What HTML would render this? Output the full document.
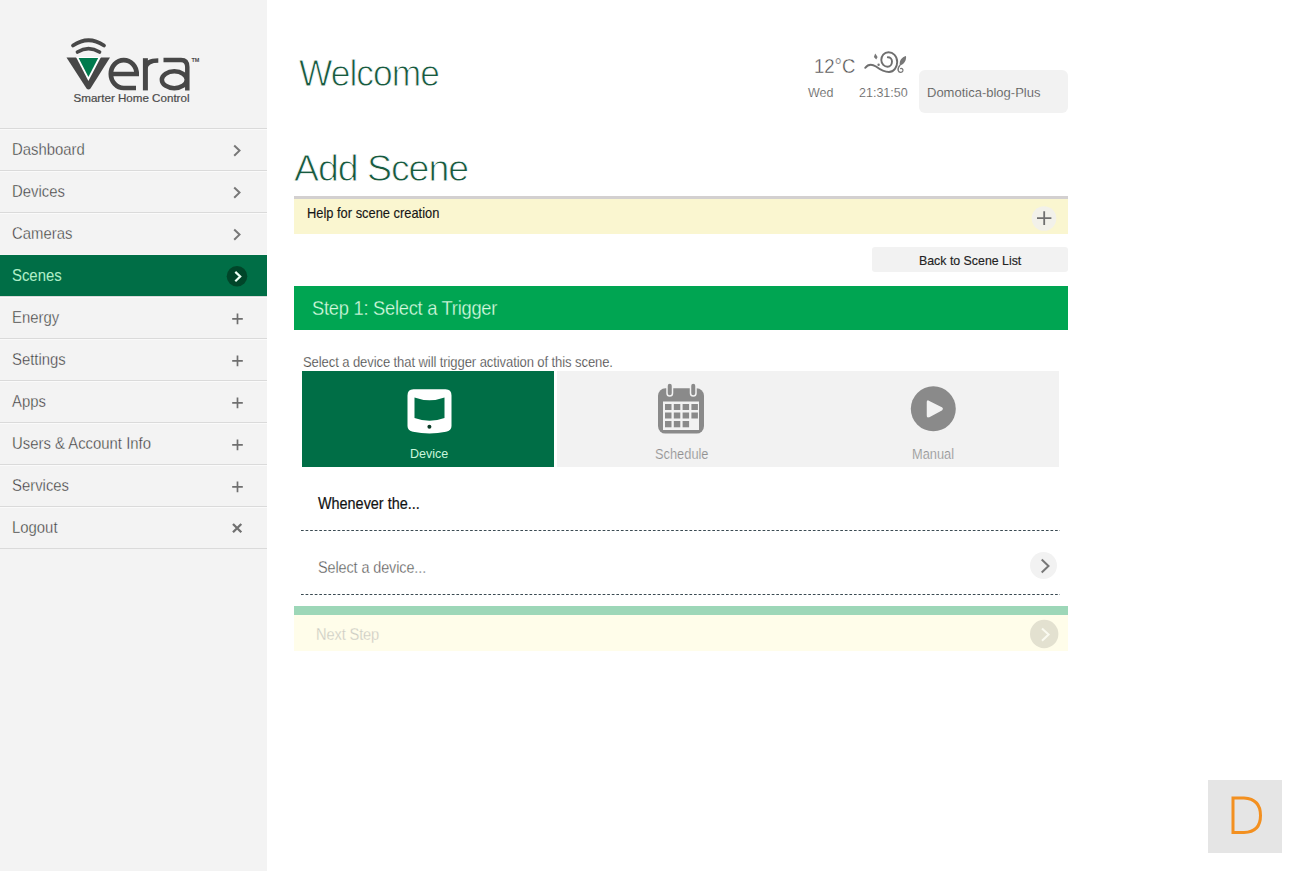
<!DOCTYPE html>
<html><head><meta charset="utf-8">
<style>
*{margin:0;padding:0;box-sizing:border-box;}
html,body{width:1300px;height:871px;overflow:hidden;background:#fff;font-family:"Liberation Sans",sans-serif;}
.abs{position:absolute;}
#side{position:absolute;left:0;top:0;width:267px;height:871px;background:#f3f3f3;}
.mi{position:absolute;left:0;width:267px;height:42px;border-top:1px solid #dadada;box-shadow:inset 0 1px 0 #fafafa;}
.mi span{position:absolute;left:12px;top:12px;font-size:16px;line-height:17px;color:#363636;white-space:nowrap;-webkit-text-stroke:0.35px #f3f3f3;transform:scaleX(0.93);transform-origin:0 0;}
.mi.act{background:#006e46;border-top:1px solid #f6f6f6;box-shadow:none;}
.mi.act span{color:#b0eec8;-webkit-text-stroke:0.05px #b0eec8;}
.mi svg{position:absolute;left:0;top:0;}
.t{position:absolute;white-space:nowrap;line-height:1;}
</style></head><body>
<div id="side">
  <svg class="abs" style="left:0;top:0" width="267" height="128" viewBox="0 0 267 128">
    <path d="M73 45.5 Q88.5 35 104 45.5" fill="none" stroke="#474747" stroke-width="3.8" stroke-linecap="round"/>
    <path d="M77.5 52 Q88.5 45.3 99.5 52" fill="none" stroke="#474747" stroke-width="3.7" stroke-linecap="round"/>
    <path d="M66.5 57.5 L110 57.5 L90.5 88.5 Q88.5 90.5 86.5 88.5 Z" fill="#474747"/>
    <path d="M76 57 L101 57 L88.4 81 Z" fill="#fff"/>
    <path d="M78.6 58 L98.2 58 L88.4 77 Z" fill="#007a4d"/>
    <g fill="none" stroke="#474747" stroke-width="4.7">
      <path d="M110.85 74 L139 74 M136.65 74 A12.9 13.95 0 0 0 110.85 74 A12.9 13.95 0 0 0 123.75 88 L136 88"/>
      <path d="M145.4 58.2 L145.4 90.4" stroke-width="5"/>
      <path d="M145.4 68 Q146.5 60.5 158.3 60.5" stroke-width="4.5"/>
      <path d="M163.5 60 L181 60 Q187.3 60 187.3 67 L187.3 90.4" stroke-width="4.5"/>
      <ellipse cx="174.3" cy="79.75" rx="12.45" ry="8.4" stroke-width="4.5"/>
    </g>
    <text x="191.5" y="62" font-family="Liberation Sans" font-weight="bold" font-size="5.5" fill="#474747">TM</text>
    <text x="73.5" y="102" font-family="Liberation Sans" font-size="10.3" fill="#4b4b4b" stroke="#4b4b4b" stroke-width="0.2" textLength="116" lengthAdjust="spacingAndGlyphs">Smarter Home Control</text>
  </svg>
  <div class="mi" style="top:128px"><span>Dashboard</span><svg width="267" height="42"><path d="M234.2 16.5 L239.5 21.6 L234.2 26.7" fill="none" stroke="#777" stroke-width="2"/></svg></div>
  <div class="mi" style="top:170px"><span>Devices</span><svg width="267" height="42"><path d="M234.2 16.5 L239.5 21.6 L234.2 26.7" fill="none" stroke="#777" stroke-width="2"/></svg></div>
  <div class="mi" style="top:212px"><span>Cameras</span><svg width="267" height="42"><path d="M234.2 16.5 L239.5 21.6 L234.2 26.7" fill="none" stroke="#777" stroke-width="2"/></svg></div>
  <div class="mi act" style="top:254px"><span>Scenes</span><svg width="267" height="42"><circle cx="237" cy="21.2" r="10.3" fill="#004529"/><path d="M235.3 16.9 L240.2 21.5 L235.3 26.3" fill="none" stroke="#eafff4" stroke-width="2.2"/></svg></div>
  <div class="mi" style="top:296px"><span>Energy</span><svg width="267" height="42"><path d="M232.2 21.8 H242.8 M237.5 16.4 V27.2" fill="none" stroke="#6f6f6f" stroke-width="1.7"/></svg></div>
  <div class="mi" style="top:338px"><span>Settings</span><svg width="267" height="42"><path d="M232.2 21.8 H242.8 M237.5 16.4 V27.2" fill="none" stroke="#6f6f6f" stroke-width="1.7"/></svg></div>
  <div class="mi" style="top:380px"><span>Apps</span><svg width="267" height="42"><path d="M232.2 21.8 H242.8 M237.5 16.4 V27.2" fill="none" stroke="#6f6f6f" stroke-width="1.7"/></svg></div>
  <div class="mi" style="top:422px"><span>Users &amp; Account Info</span><svg width="267" height="42"><path d="M232.2 21.8 H242.8 M237.5 16.4 V27.2" fill="none" stroke="#6f6f6f" stroke-width="1.7"/></svg></div>
  <div class="mi" style="top:464px"><span>Services</span><svg width="267" height="42"><path d="M232.2 21.8 H242.8 M237.5 16.4 V27.2" fill="none" stroke="#6f6f6f" stroke-width="1.7"/></svg></div>
  <div class="mi" style="top:506px"><span>Logout</span><svg width="267" height="42"><path d="M233 17 L241.3 25.3 M241.3 17 L233 25.3" fill="none" stroke="#707070" stroke-width="2.3"/></svg></div>
  <div class="mi" style="top:548px;height:1px"></div>
</div>

<div class="t" style="left:299px;top:55px;font-size:37px;letter-spacing:-1px;transform:scaleX(0.955);transform-origin:0 0;color:#185a3f;-webkit-text-stroke:0.9px #fff;">Welcome</div>
<div class="t" style="left:814px;top:56px;font-size:20.6px;color:#4a4a4a;-webkit-text-stroke:0.4px #fff;transform:scaleX(0.9);transform-origin:0 0;">12°C</div>
<!-- weather icon -->
<svg class="abs" style="left:860px;top:48px" width="50" height="30" viewBox="860 48 50 30">
  <path d="M865.2 67.8 C868 64.2 872 64 876 66.5 C880 69.5 884 72 889 72 C894 72 897.2 67 897.2 62 C897.2 56 893 52.3 888.5 52.3 C884 52.3 881.3 56 881.3 60 C881.3 64 884.5 66.7 887.5 66.7 C890.2 66.7 892 64.2 892 61.5 C892 59 890.2 57.2 887.8 57.2" fill="none" stroke="#6f6f6f" stroke-width="1.9" stroke-linecap="round"/>
  <path d="M875.2 53.5 L877.6 57 L876.2 59.6 L873.9 57 Z" fill="#777"/>
  <circle cx="878.6" cy="64.8" r="1.2" fill="#777"/>
  <path d="M899.8 65.5 C899 60.5 901.8 57 906 56 C906.6 60.5 904 64.3 899.8 65.5 Z" fill="#777"/>
  <path d="M899.8 65.5 C898.5 67 897.5 68.5 898.2 70.5 C899 72.8 902 73 902.8 71 C903.4 69.3 902 68 900.6 68.6" fill="none" stroke="#777" stroke-width="1.3" stroke-linecap="round"/>
</svg>
<div class="t" style="left:808px;top:87px;font-size:12.5px;color:#555;-webkit-text-stroke:0.2px #fff;">Wed</div>
<div class="t" style="left:859px;top:87px;font-size:12.5px;color:#555;-webkit-text-stroke:0.2px #fff;">21:31:50</div>
<div class="abs" style="left:919px;top:70px;width:149px;height:43px;background:#f2f2f2;border-radius:6px;"></div>
<div class="t" style="left:927px;top:86px;font-size:13px;color:#4a4a4a;-webkit-text-stroke:0.2px #f2f2f2;">Domotica-blog-Plus</div>

<div class="t" style="left:294px;top:150px;font-size:37.5px;letter-spacing:-1.05px;color:#185a3f;-webkit-text-stroke:0.9px #fff;">Add Scene</div>
<div class="abs" style="left:294px;top:196px;width:774px;height:38px;background:#faf6d0;border-top:3px solid #d3d0d0;"></div>
<div class="t" style="left:307px;top:206px;font-size:14.3px;color:#151515;-webkit-text-stroke:0.15px #151515;transform:scaleX(0.9);transform-origin:0 0;">Help for scene creation</div>
<svg class="abs" style="left:1030px;top:204px" width="28" height="28" viewBox="1030 204 28 28">
  <circle cx="1044" cy="218.5" r="12.3" fill="#f2f1ea"/>
  <path d="M1037 218.2 H1051.4 M1044.2 211.3 V224.9" fill="none" stroke="#707070" stroke-width="1.8"/>
</svg>

<div class="abs" style="left:872px;top:247px;width:196px;height:25px;background:#f2f2f2;border-radius:3px;"></div>
<div class="t" style="left:919px;top:254px;font-size:13px;color:#222;-webkit-text-stroke:0.15px #222;transform:scaleX(0.95);transform-origin:0 0;">Back to Scene List</div>

<div class="abs" style="left:294px;top:286px;width:774px;height:44px;background:#00a552;"></div>
<div class="t" style="left:312px;top:298px;font-size:20.6px;letter-spacing:-0.3px;color:#d6fbe0;transform:scaleX(0.89);transform-origin:0 0;-webkit-text-stroke:0.3px #00a552;">Step 1: Select a Trigger</div>

<div class="t" style="left:303px;top:355px;font-size:14.4px;letter-spacing:-0.1px;color:#3a3a3a;-webkit-text-stroke:0.25px #fff;transform:scaleX(0.906);transform-origin:0 0;">Select a device that will trigger activation of this scene.</div>
<div class="abs" style="left:557px;top:371px;width:502px;height:96px;background:#f2f2f2;"></div>
<div class="abs" style="left:302px;top:371px;width:252px;height:96px;background:#006e46;"></div>
<!-- device icon -->
<svg class="abs" style="left:400px;top:380px" width="60" height="60" viewBox="400 380 60 60">
  <path d="M413.5 389.3 L445.5 389.3 Q451.5 389.3 451.5 395.5 L451.5 426 Q451.5 430.8 446 431.8 Q429.5 435 413 431.8 Q407.5 430.8 407.5 426 L407.5 395.5 Q407.5 389.3 413.5 389.3 Z" fill="#fff"/>
  <path d="M414.5 397.5 Q429.5 403 444.5 397.5 L444.5 418 Q429.5 423.5 414.5 418 Z" fill="#006e46"/>
  <circle cx="429.4" cy="426.8" r="2" fill="#0c3b27"/>
</svg>
<!-- calendar icon -->
<svg class="abs" style="left:650px;top:378px" width="62" height="60" viewBox="650 378 62 60">
  <rect x="658" y="388.3" width="46" height="45.3" rx="7.5" fill="#8a8a8a"/>
  <rect x="663" y="401.5" width="36" height="28.5" fill="#f2f2f2"/>
  <rect x="667" y="383" width="5.5" height="13" rx="2.75" fill="#8a8a8a" stroke="#f2f2f2" stroke-width="1.5"/>
  <rect x="690.5" y="383" width="5.5" height="13" rx="2.75" fill="#8a8a8a" stroke="#f2f2f2" stroke-width="1.5"/>
  <g fill="#8a8a8a">
    <rect x="665" y="404" width="6.5" height="6"/><rect x="673.8" y="404" width="6.5" height="6"/><rect x="682.6" y="404" width="6.5" height="6"/><rect x="691.4" y="404" width="6.5" height="6"/>
    <rect x="665" y="412.5" width="6.5" height="6"/><rect x="673.8" y="412.5" width="6.5" height="6"/><rect x="682.6" y="412.5" width="6.5" height="6"/><rect x="691.4" y="412.5" width="6.5" height="6"/>
    <rect x="665" y="421" width="6.5" height="6.3"/><rect x="673.8" y="421" width="6.5" height="6.3"/><rect x="682.6" y="421" width="6.5" height="6.3"/>
  </g>
</svg>
<!-- manual icon -->
<svg class="abs" style="left:905px;top:380px" width="58" height="58" viewBox="905 380 58 58">
  <circle cx="933.3" cy="408.8" r="22.5" fill="#8a8a8a"/>
  <path d="M928.5 401.5 Q927.5 400.5 927.5 402 L927.5 415.5 Q927.5 417.5 929 416.5 L941.5 409.8 Q942.8 408.8 941.5 407.8 Z" fill="#f2f2f2" stroke="#f2f2f2" stroke-width="1.5" stroke-linejoin="round"/>
</svg>
<div class="t" style="left:410px;top:447px;font-size:13.6px;color:#c9f5dc;transform:scaleX(0.92);transform-origin:0 0;">Device</div>
<div class="t" style="left:655px;top:447.5px;font-size:13.8px;color:#8f8f8f;-webkit-text-stroke:0.2px #f2f2f2;transform:scaleX(0.93);transform-origin:0 0;">Schedule</div>
<div class="t" style="left:912px;top:447.5px;font-size:13.8px;color:#8f8f8f;-webkit-text-stroke:0.2px #f2f2f2;transform:scaleX(0.93);transform-origin:0 0;">Manual</div>

<div class="t" style="left:318px;top:496px;font-size:16px;color:#111;-webkit-text-stroke:0.2px #111;transform:scaleX(0.9);transform-origin:0 0;">Whenever the...</div>
<svg class="abs" style="left:301px;top:530px" width="760" height="1"><line x1="0" y1="0.5" x2="759" y2="0.5" stroke="#3a4a52" stroke-width="1" stroke-dasharray="2.7 1.87"/></svg>
<div class="t" style="left:318px;top:560px;font-size:16px;letter-spacing:-0.1px;color:#555;-webkit-text-stroke:0.3px #fff;transform:scaleX(0.9);transform-origin:0 0;">Select a device...</div>
<svg class="abs" style="left:1028px;top:550px" width="32" height="32" viewBox="1028 550 32 32">
  <circle cx="1043.5" cy="565.5" r="13.5" fill="#f2f2f2"/>
  <path d="M1041.7 559.5 L1048.5 566 L1041.7 572.5" fill="none" stroke="#777" stroke-width="2"/>
</svg>
<svg class="abs" style="left:301px;top:594px" width="760" height="1"><line x1="0" y1="0.5" x2="759" y2="0.5" stroke="#3a4a52" stroke-width="1" stroke-dasharray="2.7 1.87"/></svg>

<div class="abs" style="left:294px;top:606px;width:774px;height:9px;background:#9dd7b8;"></div>
<div class="abs" style="left:294px;top:615px;width:774px;height:36px;background:#fffdea;"></div>
<div class="t" style="left:316px;top:626px;font-size:16.3px;letter-spacing:-0.15px;color:#c9c9c1;transform:scaleX(0.9);transform-origin:0 0;-webkit-text-stroke:0.3px #fffdea;">Next Step</div>
<svg class="abs" style="left:1028px;top:618px" width="32" height="32" viewBox="1028 618 32 32">
  <circle cx="1044.2" cy="634" r="14.2" fill="#e3e1d0"/>
  <path d="M1042 628.4 L1048.6 634.5 L1042 640.8" fill="none" stroke="#fafaf0" stroke-width="2"/>
</svg>

<div class="abs" style="left:1208px;top:780px;width:74px;height:73px;background:#e5e5e5;"></div>
<svg class="abs" style="left:1208px;top:780px" width="74" height="73" viewBox="1208 780 74 73">
  <path d="M1233 798 L1244 798 Q1260.5 799 1260.5 815.5 Q1260.5 832 1244 832.5 L1233 832.5 Z" fill="none" stroke="#f39020" stroke-width="3"/>
</svg>
</body></html>
